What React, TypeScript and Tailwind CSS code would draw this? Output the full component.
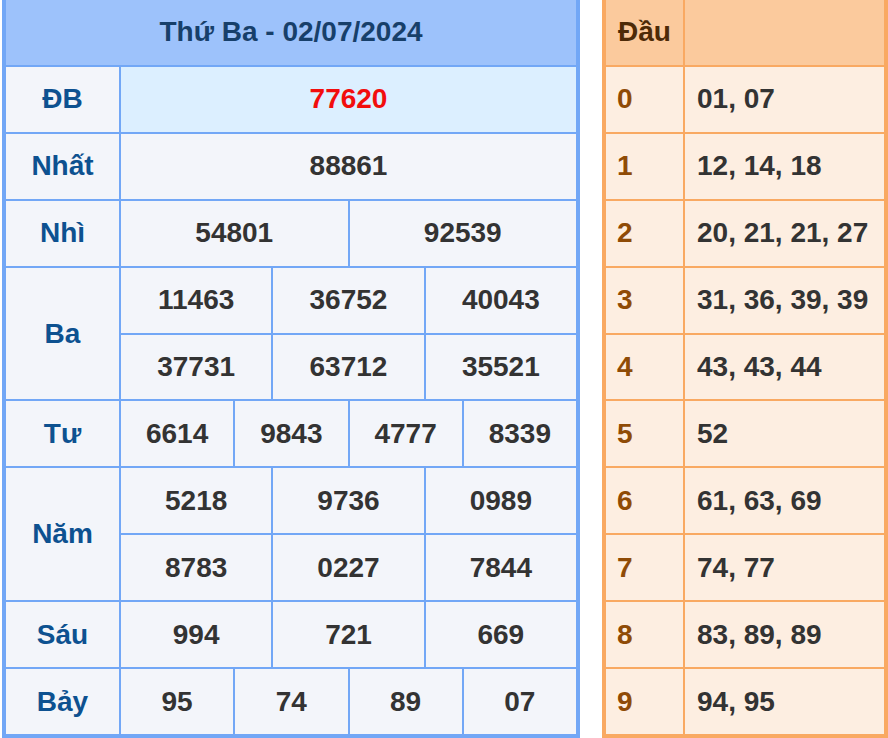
const font = { fontFamily: '"Liberation Sans", Arial, sans-serif' };

type Cell = { v: string; span: string };

const prizeRows: { label: string; rows: Cell[][]; red?: boolean }[] = [
  { label: "ĐB", rows: [[{ v: "77620", span: "col-span-12" }]], red: true },
  { label: "Nhất", rows: [[{ v: "88861", span: "col-span-12" }]] },
  {
    label: "Nhì",
    rows: [
      [
        { v: "54801", span: "col-span-6" },
        { v: "92539", span: "col-span-6" },
      ],
    ],
  },
  {
    label: "Ba",
    rows: [
      [
        { v: "11463", span: "col-span-4" },
        { v: "36752", span: "col-span-4" },
        { v: "40043", span: "col-span-4" },
      ],
      [
        { v: "37731", span: "col-span-4" },
        { v: "63712", span: "col-span-4" },
        { v: "35521", span: "col-span-4" },
      ],
    ],
  },
  {
    label: "Tư",
    rows: [
      [
        { v: "6614", span: "col-span-3" },
        { v: "9843", span: "col-span-3" },
        { v: "4777", span: "col-span-3" },
        { v: "8339", span: "col-span-3" },
      ],
    ],
  },
  {
    label: "Năm",
    rows: [
      [
        { v: "5218", span: "col-span-4" },
        { v: "9736", span: "col-span-4" },
        { v: "0989", span: "col-span-4" },
      ],
      [
        { v: "8783", span: "col-span-4" },
        { v: "0227", span: "col-span-4" },
        { v: "7844", span: "col-span-4" },
      ],
    ],
  },
  {
    label: "Sáu",
    rows: [
      [
        { v: "994", span: "col-span-4" },
        { v: "721", span: "col-span-4" },
        { v: "669", span: "col-span-4" },
      ],
    ],
  },
  {
    label: "Bảy",
    rows: [
      [
        { v: "95", span: "col-span-3" },
        { v: "74", span: "col-span-3" },
        { v: "89", span: "col-span-3" },
        { v: "07", span: "col-span-3" },
      ],
    ],
  },
];

const dau = [
  ["0", "01, 07"],
  ["1", "12, 14, 18"],
  ["2", "20, 21, 21, 27"],
  ["3", "31, 36, 39, 39"],
  ["4", "43, 43, 44"],
  ["5", "52"],
  ["6", "61, 63, 69"],
  ["7", "74, 77"],
  ["8", "83, 89, 89"],
  ["9", "94, 95"],
];

function ResultTable() {
  return (
    <div className="grid h-[738px] w-[578px] grid-cols-[113px_repeat(12,minmax(0,1fr))] grid-rows-[repeat(11,minmax(0,1fr))] gap-[2px] bg-[#72a7f6] px-[4px] pb-[4px]">
      <div className="col-span-13 flex items-center justify-center bg-[#9dc2fb] text-[28px] font-bold text-[#173f6a]">
        Thứ Ba - 02/07/2024
      </div>
      {prizeRows.map((p) => (
        <>
          <div
            key={p.label}
            className={`${p.rows.length === 2 ? "row-span-2" : ""} flex items-center justify-center bg-[#f3f5fa] text-[28px] font-bold text-[#0d5190]`}
          >
            {p.label}
          </div>
          {p.rows.map((r) =>
            r.map((c) => (
              <div
                key={c.v}
                className={`${c.span} flex items-center justify-center text-[28px] font-bold ${
                  p.red ? "bg-[#dcefff] text-[#f20d0d]" : "bg-[#f3f5fa] text-[#333333]"
                }`}
              >
                {c.v}
              </div>
            ))
          )}
        </>
      ))}
    </div>
  );
}

function DauTable() {
  return (
    <div className="grid h-[738px] w-[286px] grid-cols-[77px_minmax(0,1fr)] grid-rows-[repeat(11,minmax(0,1fr))] gap-[2px] bg-[#f9a962] px-[4px] pb-[4px]">
      <div className="flex items-center bg-[#fbca9d] pl-[12px] text-[28px] font-bold text-[#4d2a07]">Đầu</div>
      <div className="bg-[#fbca9d]" />
      {dau.map(([d, v]) => (
        <>
          <div key={d} className="flex items-center bg-[#fdeee1] pl-[11px] text-[28px] font-bold text-[#8f4b06]">
            {d}
          </div>
          <div key={d + "v"} className="flex items-center bg-[#fdeee1] pl-[12px] text-[28px] font-bold text-[#333333]">
            {v}
          </div>
        </>
      ))}
    </div>
  );
}

export default function App() {
  return (
    <div className="flex h-[738px] w-[888px] gap-[22px] overflow-hidden bg-white pl-[2px]" style={font}>
      <ResultTable />
      <DauTable />
    </div>
  );
}
